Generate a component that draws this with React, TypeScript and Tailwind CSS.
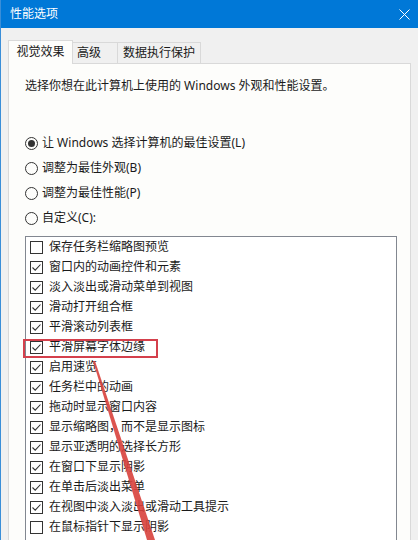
import React from "react";

const FONT = "font-['Microsoft_YaHei','Noto_Sans','Noto_Sans_CJK_SC',sans-serif]";

const radios = [
  { label: "让 Windows 选择计算机的最佳设置(L)", on: true },
  { label: "调整为最佳外观(B)", on: false },
  { label: "调整为最佳性能(P)", on: false },
  { label: "自定义(C):", on: false },
];

const items: [string, boolean][] = [
  ["保存任务栏缩略图预览", false],
  ["窗口内的动画控件和元素", true],
  ["淡入淡出或滑动菜单到视图", true],
  ["滑动打开组合框", true],
  ["平滑滚动列表框", true],
  ["平滑屏幕字体边缘", true],
  ["启用速览", true],
  ["任务栏中的动画", true],
  ["拖动时显示窗口内容", true],
  ["显示缩略图，而不是显示图标", true],
  ["显示亚透明的选择长方形", true],
  ["在窗口下显示阴影", true],
  ["在单击后淡出菜单", true],
  ["在视图中淡入淡出或滑动工具提示", true],
  ["在鼠标指针下显示阴影", false],
];

function Radio({ on }: { on: boolean }) {
  return (
    <span className="flex h-[13px] w-[13px] shrink-0 items-center justify-center rounded-full border border-[#333]">
      {on && <span className="h-[7px] w-[7px] rounded-full bg-[#333]" />}
    </span>
  );
}

function Check({ on }: { on: boolean }) {
  return (
    <span className="flex h-[13px] w-[13px] shrink-0 items-center justify-center border border-[#333] bg-white">
      {on && (
        <svg width="11" height="11" viewBox="0 0 11 11">
          <polyline points="1.5,5.5 4.2,8.2 9.5,2.5" fill="none" stroke="#333" strokeWidth="1.1" />
        </svg>
      )}
    </span>
  );
}

export default function App() {
  return (
    <div className={`relative h-[540px] w-[418px] overflow-hidden border-l border-[#3a8ed8] bg-[#f0f0f0] text-[12px] text-[#1a1a1a] ${FONT}`}>
      <div className="flex h-[28px] items-center justify-between bg-[#0078d7] pl-[9px] pr-[8px] text-white">
        <span className="text-[12px]">性能选项</span>
        <svg width="11" height="11" viewBox="0 0 11 11">
          <path d="M0.5 0.5L10.5 10.5M10.5 0.5L0.5 10.5" stroke="#fff" strokeWidth="1" />
        </svg>
      </div>

      <div className="pl-[7px] pr-[7px] pt-[12px]">
        <div className="flex items-end">
          <div className="relative z-10 -mb-px flex h-[24px] w-[65px] items-center justify-center border border-b-0 border-[#d9d9d9] bg-[#fdfdfb] pb-[2px]">
            视觉效果
          </div>
          <div className="flex h-[21px] w-[45px] items-center border border-b-0 border-l-0 border-[#d9d9d9] bg-[#f0f0f0] pl-[4px]">
            高级
          </div>
          <div className="flex h-[21px] w-[83px] items-center justify-center border border-b-0 border-l-0 border-[#d9d9d9] bg-[#f0f0f0]">
            数据执行保护
          </div>
        </div>

        <div className="h-[480px] border border-[#d9d9d9] bg-[#fdfdfb] pl-[16px] pr-[13px] pt-[14px]">
          <p className="leading-[16px]">选择你想在此计算机上使用的 Windows 外观和性能设置。</p>

          <div className="mt-[41px] flex flex-col gap-[9px]">
            {radios.map((r) => (
              <div key={r.label} className="flex h-[16px] items-center gap-[4px]">
                <Radio on={r.on} />
                <span className="leading-[16px]">{r.label}</span>
              </div>
            ))}
          </div>

          <div className="mt-[10px] h-[320px] border border-[#828790] bg-white pl-[4px]">
            {items.map(([label, on]) => (
              <div key={label} className="flex h-[20px] items-center gap-[6px]">
                <Check on={on} />
                <span className="leading-[16px]">{label}</span>
              </div>
            ))}
          </div>
        </div>
      </div>

      <div className="pointer-events-none absolute left-[22px] top-[339px] h-[19px] w-[135px] border-2 border-[#d4404c]" />

      <svg className="pointer-events-none absolute left-0 top-0" width="418" height="540">
        <polygon points="92,361 94,361 154,540 146,540" fill="#d8413c" fillOpacity="0.9" />
      </svg>
    </div>
  );
}
